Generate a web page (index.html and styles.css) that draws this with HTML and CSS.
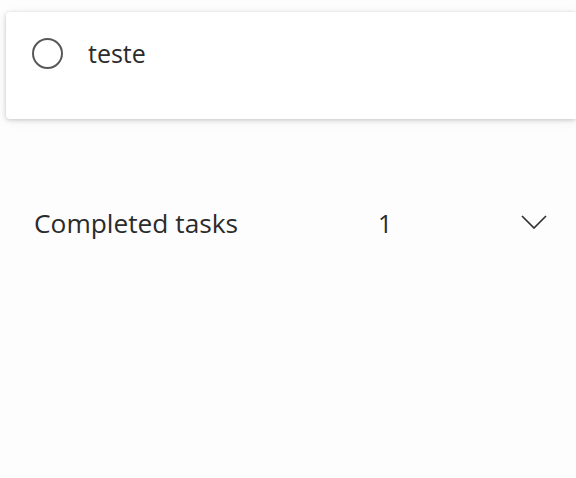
FILE: index.html
```html
<!DOCTYPE html>
<html>
<head>
<meta charset="utf-8">
<link rel="stylesheet" href="styles.css">
</head>
<body>
<div class="page">
  <div class="card">
    <span class="radio"></span>
    <span class="title">teste</span>
  </div>
  <div class="completed">
    <span class="label">Completed tasks</span>
    <span class="count">1</span>
    <svg class="chev" width="26" height="14" viewBox="0 0 26 14"><path d="M1 1 L13 13 L25 1" fill="none" stroke="#333" stroke-width="1.7"/></svg>
  </div>
</div>
</body>
</html>
```
FILE: styles.css
```css
html, body { margin: 0; padding: 0; }
body {
  background: #fdfdfd;
  font-family: "Open Sans", "Noto Sans", sans-serif;
  color: #2b2b2b;
  width: 576px;
  height: 478px;
  overflow: hidden;
}
.page { padding-top: 12px; padding-left: 6px; }
.card {
  height: 107px;
  background: #fff;
  border-radius: 4px 0 0 4px;
  box-shadow: 0 1px 4px rgba(0,0,0,0.18), 0 2px 12px rgba(0,0,0,0.07);
  display: flex;
  align-items: flex-start;
  padding-top: 26px;
  box-sizing: border-box;
}
.radio {
  width: 27px; height: 27px;
  border: 2px solid #585858;
  border-radius: 50%;
  margin-left: 26px;
  flex: none;
}
.title {
  margin-left: 25px;
  font-size: 25px;
  line-height: 30px;
}
.completed {
  display: flex;
  align-items: center;
  margin-top: 87px;
  height: 34px;
  padding-left: 28px;
}
.label { font-size: 26.3px; width: 344px; }
.count { font-size: 25px; width: 143px; }
.chev { margin-top: -3px; }
```
